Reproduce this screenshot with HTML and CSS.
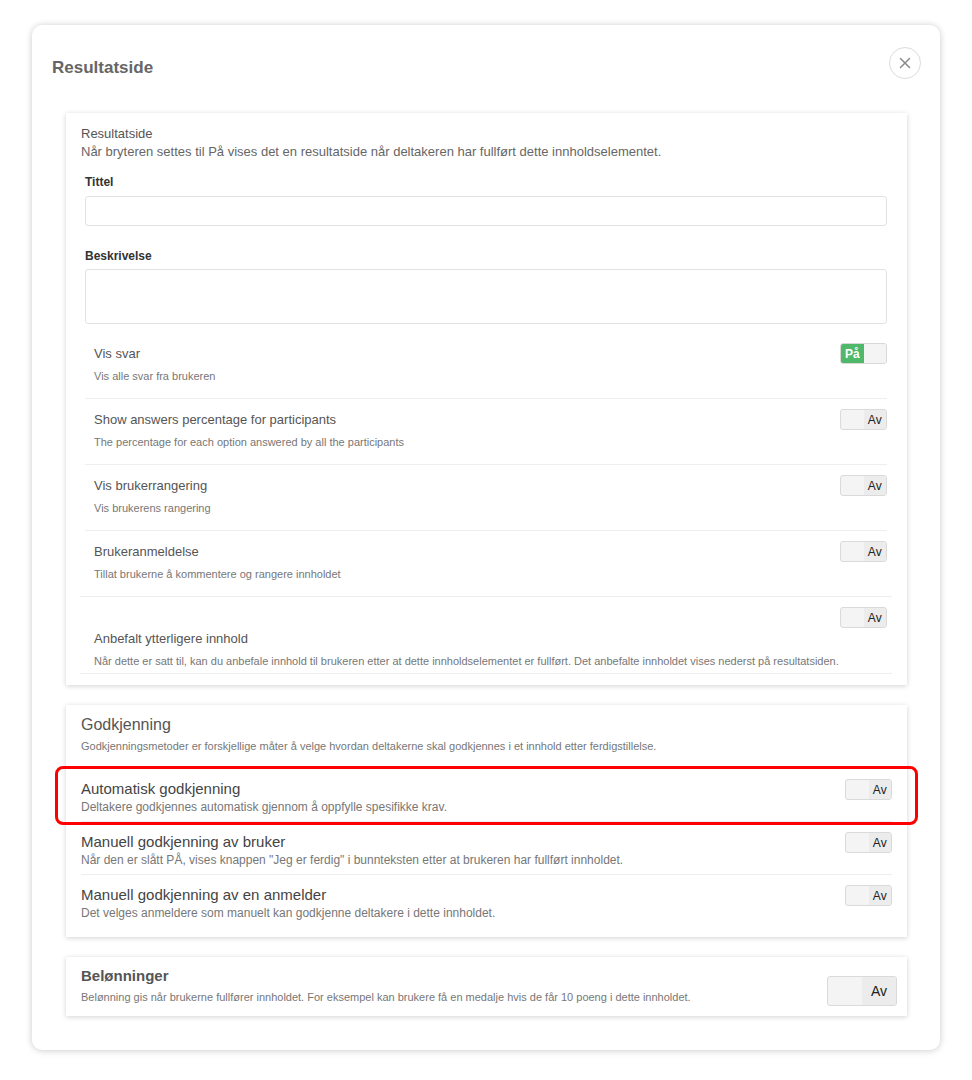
FILE: index.html
```html
<!DOCTYPE html>
<html lang="nb">
<head>
  <meta charset="UTF-8" />
  <meta name="viewport" content="width=device-width, initial-scale=1.0" />
  <title>Resultatside</title>
  <link rel="stylesheet" href="styles.css">
</head>
<body>

  <div class="modal">
    <div class="modal-head">
      <h2>Resultatside</h2>
      <button class="close-btn" type="button" aria-label="Lukk">
        <svg width="12" height="12" viewBox="0 0 12 12"><path d="M1.5 1.5l9 9M10.5 1.5l-9 9" stroke="#8a8a8a" stroke-width="1.5" stroke-linecap="round"/></svg>
      </button>
    </div>

    <div class="modal-body">

      <div class="card">
        <div class="card-intro">
          <div class="intro-title">Resultatside</div>
          <div class="intro-desc">Når bryteren settes til På vises det en resultatside når deltakeren har fullført dette innholdselementet.</div>
        </div>

        <div class="fields">
          <label class="field-label" for="rsTitle">Tittel</label>
          <input class="field-input" type="text" id="rsTitle">

          <label class="field-label field-label-gap" for="rsDesc">Beskrivelse</label>
          <textarea class="field-area" id="rsDesc"></textarea>

          <div class="opt-row opt-first">
            <div class="opt-text">
              <div class="opt-title">Vis svar</div>
              <div class="opt-desc">Vis alle svar fra brukeren</div>
            </div>
            <span class="toggle on"><span class="t-on">På</span><span class="t-off"></span></span>
          </div>

          <div class="opt-row">
            <div class="opt-text">
              <div class="opt-title">Show answers percentage for participants</div>
              <div class="opt-desc">The percentage for each option answered by all the participants</div>
            </div>
            <span class="toggle"><span class="t-on"></span><span class="t-off">Av</span></span>
          </div>

          <div class="opt-row">
            <div class="opt-text">
              <div class="opt-title">Vis brukerrangering</div>
              <div class="opt-desc">Vis brukerens rangering</div>
            </div>
            <span class="toggle"><span class="t-on"></span><span class="t-off">Av</span></span>
          </div>

          <div class="opt-row">
            <div class="opt-text">
              <div class="opt-title">Brukeranmeldelse</div>
              <div class="opt-desc">Tillat brukerne å kommentere og rangere innholdet</div>
            </div>
            <span class="toggle"><span class="t-on"></span><span class="t-off">Av</span></span>
          </div>

          <div class="opt-row opt-stacked">
            <span class="toggle"><span class="t-on"></span><span class="t-off">Av</span></span>
            <div class="opt-text">
              <div class="opt-title">Anbefalt ytterligere innhold</div>
              <div class="opt-desc">Når dette er satt til, kan du anbefale innhold til brukeren etter at dette innholdselementet er fullført. Det anbefalte innholdet vises nederst på resultatsiden.</div>
            </div>
          </div>
        </div>
      </div>

      <div class="card card-group">
        <div class="group-title">Godkjenning</div>
        <div class="group-desc group-desc-gap">Godkjenningsmetoder er forskjellige måter å velge hvordan deltakerne skal godkjennes i et innhold etter ferdigstillelse.</div>

        <div class="app-row highlight">
          <div class="opt-text">
            <div class="app-title">Automatisk godkjenning</div>
            <div class="app-desc">Deltakere godkjennes automatisk gjennom å oppfylle spesifikke krav.</div>
          </div>
          <span class="toggle"><span class="t-on"></span><span class="t-off">Av</span></span>
        </div>

        <div class="app-row">
          <div class="opt-text">
            <div class="app-title">Manuell godkjenning av bruker</div>
            <div class="app-desc">Når den er slått PÅ, vises knappen "Jeg er ferdig" i bunnteksten etter at brukeren har fullført innholdet.</div>
          </div>
          <span class="toggle"><span class="t-on"></span><span class="t-off">Av</span></span>
        </div>

        <div class="app-row">
          <div class="opt-text">
            <div class="app-title">Manuell godkjenning av en anmelder</div>
            <div class="app-desc">Det velges anmeldere som manuelt kan godkjenne deltakere i dette innholdet.</div>
          </div>
          <span class="toggle"><span class="t-on"></span><span class="t-off">Av</span></span>
        </div>
      </div>

      <div class="card card-group reward">
        <div class="opt-text">
          <div class="group-title group-title-bold">Belønninger</div>
          <div class="group-desc group-desc-gap">Belønning gis når brukerne fullfører innholdet. For eksempel kan brukere få en medalje hvis de får 10 poeng i dette innholdet.</div>
        </div>
        <span class="toggle toggle-lg"><span class="t-on"></span><span class="t-off">Av</span></span>
      </div>

    </div>
  </div>

</body>
</html>
```

FILE: styles.css
```css
body {
  font-family: "Liberation Sans", Arial, Helvetica, sans-serif;
  background-color: #ffffff;
  color: #555;
  margin: 0;
  padding: 25px 32px 30px;
}

.modal {
  width: 908px;
  background-color: #fff;
  border-radius: 10px;
  box-shadow: 0 0 6px rgba(0,0,0,0.16), 0 2px 10px rgba(0,0,0,0.06);
}

.modal-head {
  display: flex;
  justify-content: space-between;
  align-items: flex-start;
  padding: 22px 19px 0 20px;
  height: 66px;
}

.modal-head h2 {
  margin: 10px 0 0;
  font-size: 17px;
  line-height: 22px;
  font-weight: bold;
  color: #666;
}

.close-btn {
  width: 32px;
  height: 32px;
  border-radius: 50%;
  border: 1px solid #dcdcdc;
  background: #fff;
  padding: 0;
  display: flex;
  align-items: center;
  justify-content: center;
  cursor: pointer;
}

.modal-body {
  padding: 0 33px 34px 34px;
  display: flex;
  flex-direction: column;
  gap: 20px;
}

.card {
  background: #fff;
  box-shadow: 0 1px 5px rgba(0,0,0,0.18);
}

/* first card */
.card:first-child {
  padding: 11px 20px 11px 15px;
}

.intro-title {
  font-size: 13px;
  line-height: 19px;
  color: #555;
}

.intro-desc {
  font-size: 13px;
  line-height: 18px;
  color: #666;
}

.fields {
  padding-left: 4px;
  margin-top: 13px;
}

.field-label {
  display: block;
  font-size: 12px;
  line-height: 16px;
  font-weight: bold;
  color: #333;
  margin-bottom: 6px;
}

.field-label-gap {
  margin-top: 22px;
  margin-bottom: 5px;
}

.field-input,
.field-area {
  display: block;
  width: 100%;
  box-sizing: border-box;
  border: 1px solid #e2e2e2;
  border-radius: 3px;
  background: #fff;
  margin: 0;
}

.field-input {
  height: 30px;
}

.field-area {
  height: 55px;
  resize: none;
}

.opt-row {
  display: flex;
  justify-content: space-between;
  align-items: flex-start;
  padding: 10px 0 14px 9px;
  border-top: 1px solid #eee;
}

.opt-first {
  border-top: none;
  margin-top: 9px;
}

.opt-title {
  font-size: 13px;
  line-height: 21px;
  color: #555;
}

.opt-desc {
  font-size: 11px;
  line-height: 16px;
  color: #777;
  margin-top: 4px;
}

.opt-stacked {
  flex-direction: column;
  align-items: stretch;
  padding-bottom: 4px;
  border-bottom: 1px solid #eee;
  margin-left: -5px;
  margin-right: -5px;
  padding-left: 14px;
  padding-right: 5px;
}

.opt-stacked .toggle {
  align-self: flex-end;
}

/* approval card */
.card-group {
  padding: 9px 15px 10px 15px;
}

.group-title {
  font-size: 16px;
  line-height: 22px;
  color: #555;
}

.group-title-bold {
  font-size: 15px;
  font-weight: bold;
}

.group-desc {
  font-size: 11px;
  line-height: 16px;
  color: #777;
}

.group-desc-gap {
  margin-top: 2px;
}

.app-row {
  position: relative;
  display: flex;
  justify-content: space-between;
  align-items: flex-start;
  padding: 10px 0 6px;
  border-top: 1px solid #eee;
}

.app-row .opt-text {
  padding-top: 1px;
}

.app-title {
  font-size: 15px;
  line-height: 18px;
  color: #444;
  margin-bottom: 1px;
}

.app-desc {
  font-size: 12px;
  line-height: 16px;
  color: #777;
}

.highlight {
  margin-top: 15px;
  border-top: none;
}

.highlight::before {
  content: "";
  position: absolute;
  left: -26px;
  right: -26px;
  top: -3px;
  bottom: -4px;
  border: 3px solid #ff0000;
  border-radius: 8px;
  pointer-events: none;
}

.reward {
  display: flex;
  justify-content: space-between;
  align-items: flex-end;
  padding-top: 8px;
  padding-bottom: 11px;
  padding-right: 10px;
}

.reward .toggle-lg {
  margin-bottom: -1px;
}

/* switch */
.toggle {
  display: inline-flex;
  width: 47px;
  height: 21px;
  box-sizing: border-box;
  border: 1px solid #dadada;
  border-radius: 3px;
  background: #f4f4f4;
  overflow: hidden;
  flex-shrink: 0;
  font-size: 12px;
  color: #222;
}

.toggle .t-on,
.toggle .t-off {
  flex: 1;
  display: flex;
  align-items: center;
  justify-content: center;
}

.toggle .t-off {
  background: #ececec;
}

.toggle.on {
  border-color: #d8d8d8;
}

.toggle.on .t-on {
  background: #4fb86b;
  color: #fff;
  font-weight: bold;
}

.toggle.on .t-off {
  background: #f4f4f4;
}

.toggle-lg {
  width: 70px;
  height: 30px;
  font-size: 14px;
}
```
